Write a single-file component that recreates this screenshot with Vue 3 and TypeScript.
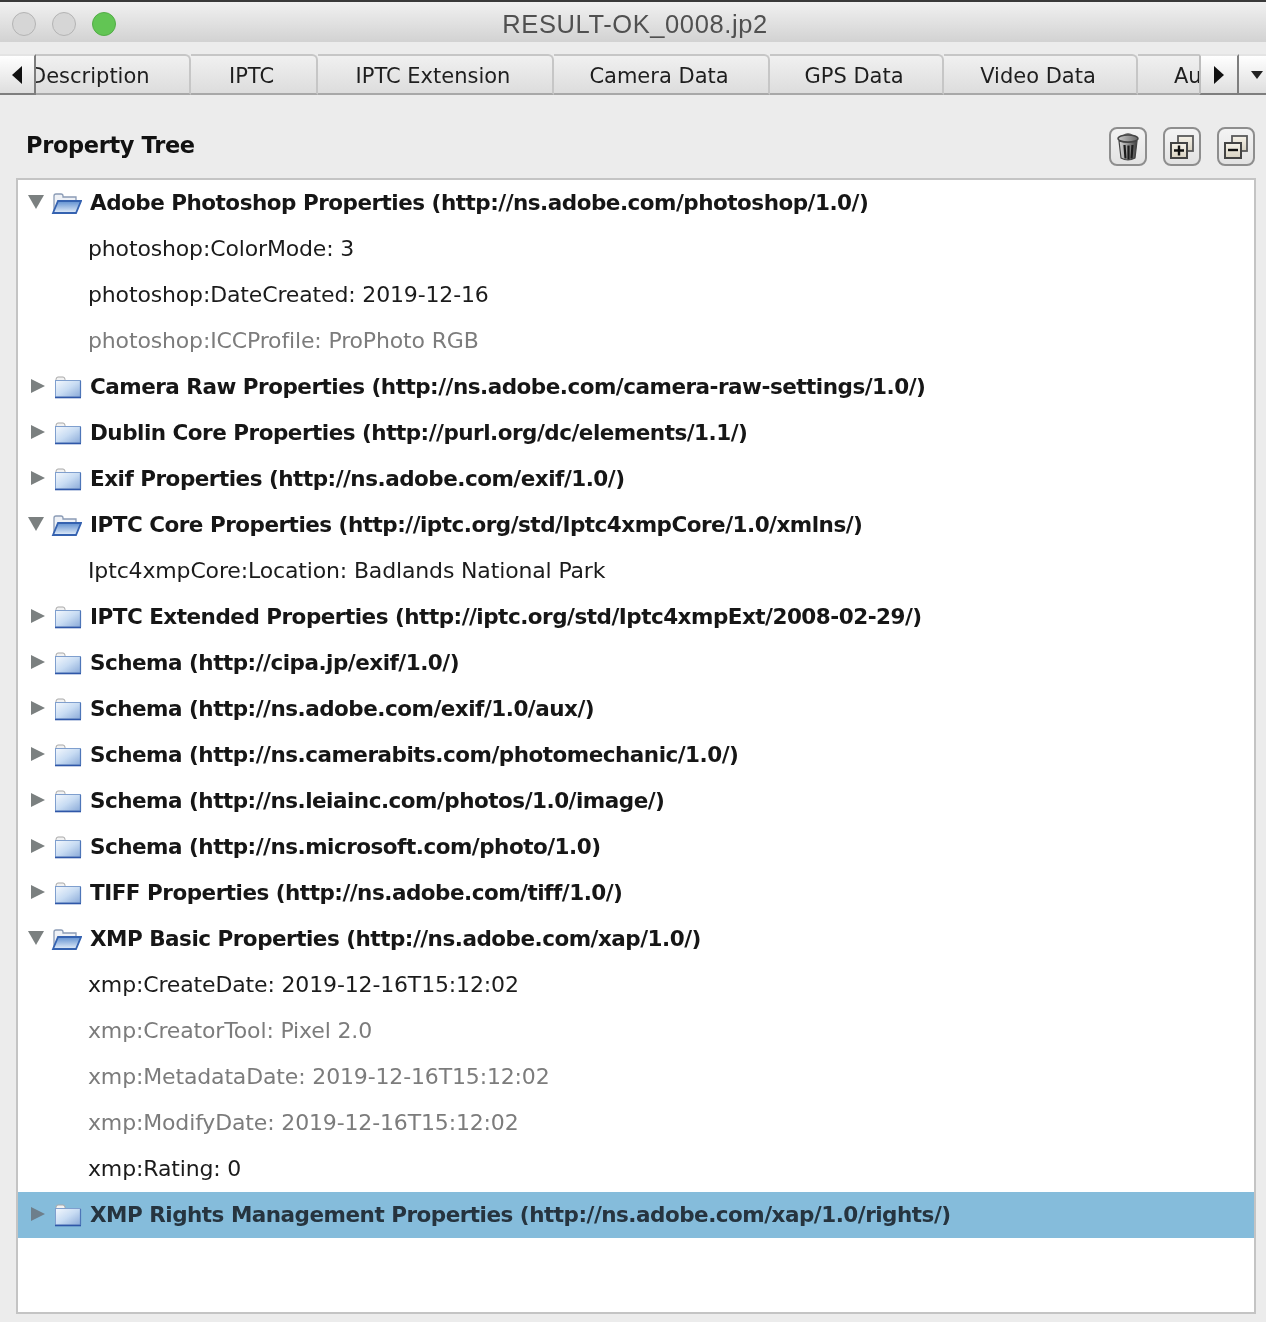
<script setup lang="ts">
interface Row { text: string; kind: 'open' | 'closed' | 'leaf' | 'muted'; selected?: boolean }
const tabs = ['Description', 'IPTC', 'IPTC Extension', 'Camera Data', 'GPS Data', 'Video Data', 'Audio Data']
const rows: Row[] = [
  { text: 'Adobe Photoshop Properties (http://ns.adobe.com/photoshop/1.0/)', kind: 'open' },
  { text: 'photoshop:ColorMode: 3', kind: 'leaf' },
  { text: 'photoshop:DateCreated: 2019-12-16', kind: 'leaf' },
  { text: 'photoshop:ICCProfile: ProPhoto RGB', kind: 'muted' },
  { text: 'Camera Raw Properties (http://ns.adobe.com/camera-raw-settings/1.0/)', kind: 'closed' },
  { text: 'Dublin Core Properties (http://purl.org/dc/elements/1.1/)', kind: 'closed' },
  { text: 'Exif Properties (http://ns.adobe.com/exif/1.0/)', kind: 'closed' },
  { text: 'IPTC Core Properties (http://iptc.org/std/Iptc4xmpCore/1.0/xmlns/)', kind: 'open' },
  { text: 'Iptc4xmpCore:Location: Badlands National Park', kind: 'leaf' },
  { text: 'IPTC Extended Properties (http://iptc.org/std/Iptc4xmpExt/2008-02-29/)', kind: 'closed' },
  { text: 'Schema (http://cipa.jp/exif/1.0/)', kind: 'closed' },
  { text: 'Schema (http://ns.adobe.com/exif/1.0/aux/)', kind: 'closed' },
  { text: 'Schema (http://ns.camerabits.com/photomechanic/1.0/)', kind: 'closed' },
  { text: 'Schema (http://ns.leiainc.com/photos/1.0/image/)', kind: 'closed' },
  { text: 'Schema (http://ns.microsoft.com/photo/1.0)', kind: 'closed' },
  { text: 'TIFF Properties (http://ns.adobe.com/tiff/1.0/)', kind: 'closed' },
  { text: 'XMP Basic Properties (http://ns.adobe.com/xap/1.0/)', kind: 'open' },
  { text: 'xmp:CreateDate: 2019-12-16T15:12:02', kind: 'leaf' },
  { text: 'xmp:CreatorTool: Pixel 2.0', kind: 'muted' },
  { text: 'xmp:MetadataDate: 2019-12-16T15:12:02', kind: 'muted' },
  { text: 'xmp:ModifyDate: 2019-12-16T15:12:02', kind: 'muted' },
  { text: 'xmp:Rating: 0', kind: 'leaf' },
  { text: 'XMP Rights Management Properties (http://ns.adobe.com/xap/1.0/rights/)', kind: 'closed', selected: true },
]
</script>

<template>
  <div class="window">
    <header class="titlebar">
      <div class="lights">
        <span class="light"></span>
        <span class="light"></span>
        <span class="light green"></span>
      </div>
      <span class="title">RESULT-OK_0008.jp2</span>
    </header>

    <nav class="tabstrip">
      <div class="tabs">
        <div v-for="t in tabs" :key="t" class="tab">{{ t }}</div>
      </div>
      <div class="scroll left">
        <svg width="12" height="18" viewBox="0 0 12 18"><path d="M11 0V18L1 9Z" fill="#111" /></svg>
      </div>
      <div class="scroll right">
        <svg width="12" height="18" viewBox="0 0 12 18"><path d="M1 0V18L11 9Z" fill="#111" /></svg>
      </div>
      <div class="scroll menu">
        <svg width="12" height="8" viewBox="0 0 12 8"><path d="M0 0H12L6 8Z" fill="#222" /></svg>
      </div>
    </nav>

    <section class="panel">
      <div class="panel-head">
        <h2 class="panel-title">Property Tree</h2>
        <div class="tools">
          <button class="tool" aria-label="Delete">
            <svg width="24" height="30" viewBox="0 0 24 30">
              <defs>
                <linearGradient id="can" x1="0" x2="1" y1="0" y2="0">
                  <stop offset="0" stop-color="#d8d8d8" />
                  <stop offset=".45" stop-color="#9a9a9a" />
                  <stop offset="1" stop-color="#3e3e3e" />
                </linearGradient>
                <linearGradient id="lid" x1="0" x2="1" y1="0" y2="0">
                  <stop offset="0" stop-color="#c8c8c8" />
                  <stop offset="1" stop-color="#6a6a6a" />
                </linearGradient>
              </defs>
              <path d="M8 3.5Q12 0.5 16 3.5" fill="none" stroke="#777" stroke-width="2" />
              <ellipse cx="12" cy="6.5" rx="10" ry="3.5" fill="url(#lid)" stroke="#444" stroke-width="1.4" />
              <path d="M3 9L5 26Q12 30 19 26L21 9Q12 12 3 9Z" fill="url(#can)" stroke="#444" stroke-width="1.2" />
              <path d="M8.5 13L9.5 26.5M12.5 13.5V27.5M16.5 13L15.5 26.5" stroke="#1c1c1c" stroke-width="2.2" fill="none" />
            </svg>
          </button>
          <button class="tool" aria-label="Expand all">
            <svg width="26" height="26" viewBox="0 0 26 26">
              <defs>
                <linearGradient id="page" x1="0" x2="0" y1="0" y2="1">
                  <stop offset="0" stop-color="#f6f2e8" />
                  <stop offset="1" stop-color="#d8d2c2" />
                </linearGradient>
              </defs>
              <rect x="9" y="2" width="15" height="15" fill="url(#page)" stroke="#5a5a5a" stroke-width="1.8" />
              <rect x="2" y="9" width="16" height="15" fill="url(#page)" stroke="#444" stroke-width="2" />
              <path d="M10 11.5V21.5M5 16.5H15" stroke="#111" stroke-width="2.4" />
            </svg>
          </button>
          <button class="tool" aria-label="Collapse all">
            <svg width="26" height="26" viewBox="0 0 26 26">
              <rect x="9" y="2" width="15" height="15" fill="url(#page)" stroke="#5a5a5a" stroke-width="1.8" />
              <rect x="2" y="9" width="16" height="15" fill="url(#page)" stroke="#444" stroke-width="2" />
              <path d="M5 16H15" stroke="#111" stroke-width="2.4" />
            </svg>
          </button>
        </div>
      </div>

      <div class="tree">
        <svg class="defs" width="0" height="0">
          <defs>
            <linearGradient id="fold" x1="0" y1="0" x2="1" y2="1">
              <stop offset="0" stop-color="#f4f8fd" />
              <stop offset=".5" stop-color="#c8dcf3" />
              <stop offset="1" stop-color="#8aaad8" />
            </linearGradient>
            <linearGradient id="foldopen" x1="0" y1="0" x2="0" y2="1">
              <stop offset="0" stop-color="#5f8fd0" />
              <stop offset="1" stop-color="#e4eefa" />
            </linearGradient>
          </defs>
        </svg>
        <div
          v-for="r in rows"
          :key="r.text"
          class="row"
          :class="[r.kind, { selected: r.selected }]"
        >
          <template v-if="r.kind === 'closed'">
            <svg class="arrow" width="16" height="16" viewBox="0 0 16 16"><path d="M1 1V15L15 8Z" /></svg>
            <svg class="folder" width="28" height="24" viewBox="0 0 28 24">
              <path d="M2 4.5Q2 2 4 2H9Q11 2 11 4.5V6H2Z" fill="#f2f2f2" stroke="#a8a8a8" />
              <rect x="1.5" y="5.5" width="25" height="16.5" fill="url(#fold)" stroke="#7f9fce" />
              <path d="M1 22.5H27" stroke="#2f57a8" stroke-width="1.6" />
              <path d="M26.5 6V22" stroke="#4e76b8" stroke-width="1.2" />
            </svg>
          </template>
          <template v-else-if="r.kind === 'open'">
            <svg class="arrow down" width="16" height="16" viewBox="0 0 16 16"><path d="M0 1H16L8 15Z" /></svg>
            <svg class="folder wide" width="31" height="24" viewBox="0 0 31 24">
              <path d="M3 21V5Q3 3 5 3H10Q12 3 12 5V6H25V10H8L3 21Z" fill="#eef1f6" stroke="#8a9bb5" stroke-width="1.3" />
              <path d="M7 10H30L25 22H2Z" fill="url(#foldopen)" stroke="#3562b0" stroke-width="1.8" />
            </svg>
          </template>
          <span class="label">{{ r.text }}</span>
        </div>
      </div>
    </section>
  </div>
</template>

<style scoped>
.window {
  width: 1266px;
  height: 1322px;
  display: flex;
  flex-direction: column;
  background: #ececec;
  font-family: "DejaVu Sans", sans-serif;
  color: #1b1b1b;
  overflow: hidden;
  filter: blur(0.5px);
}
.titlebar {
  height: 42px;
  flex: none;
  position: relative;
  display: flex;
  align-items: center;
  justify-content: center;
  background: linear-gradient(#f1f1f1, #d2d2d2);
  border-top: 2px solid #3a3a3a;
  box-sizing: border-box;
  padding: 4px 0 0 4px;
}
.lights {
  position: absolute;
  left: 12px;
  top: 10px;
  display: flex;
  gap: 16px;
}
.light {
  width: 24px;
  height: 24px;
  box-sizing: border-box;
  border-radius: 50%;
  background: #d6d6d6;
  border: 1px solid #b4b4b4;
}
.light.green {
  background: #62c554;
  border-color: #53ad47;
}
.title {
  font-family: "Liberation Sans", Arial, sans-serif;
  font-size: 25.5px;
  letter-spacing: 0.6px;
  color: #505050;
}
.tabstrip {
  margin-top: 12px;
  height: 41px;
  flex: none;
  position: relative;
}
.tabs {
  height: 100%;
  display: grid;
  grid-template-columns: 191px 127px 236px 216px 174px 194px 128px;
  overflow: hidden;
}
.tab {
  display: flex;
  align-items: center;
  justify-content: center;
  box-sizing: border-box;
  padding: 3px 4px 0 0;
  font-size: 21px;
  color: #1e1e1e;
  background: linear-gradient(#f0f0f0, #dddddd);
  border-top: 2px solid #c6c6c6;
  border-bottom: 2px solid #a8a8a8;
  border-right: 2px solid #c6c6c6;
  border-top-right-radius: 6px;
  overflow: hidden;
  white-space: nowrap;
}
.tab:first-child {
  justify-content: flex-start;
  padding-left: 30px;
}
.tab:last-child {
  justify-content: flex-start;
  padding-left: 36px;
  border-right: 0;
}
.scroll {
  position: absolute;
  top: 0;
  bottom: 0;
  box-sizing: border-box;
  display: flex;
  align-items: center;
  justify-content: center;
  background: linear-gradient(#ffffff, #dedede);
  border-top: 2px solid #e4e4e4;
  border-bottom: 2px solid #7e7e7e;
}
.scroll.left {
  left: 0;
  width: 36px;
  border-right: 2px solid #7e7e7e;
}
.scroll.right {
  left: 1199px;
  width: 40px;
  border-left: 2px solid #bdbdbd;
  border-right: 2px solid #7e7e7e;
}
.scroll.menu {
  left: 1239px;
  width: 27px;
  padding-left: 8px;
}
.panel {
  flex: 1;
  display: flex;
  flex-direction: column;
  padding: 32px 10px 8px 16px;
  min-height: 0;
}
.panel-head {
  height: 51px;
  flex: none;
  display: flex;
  align-items: flex-start;
  justify-content: space-between;
  padding-left: 10px;
}
.panel-title {
  margin: 0;
  font-size: 22.5px;
  line-height: 36px;
  font-weight: 700;
  letter-spacing: -0.35px;
  color: #111;
}
.tools {
  display: flex;
  gap: 16px;
  margin-right: 1px;
}
.tool {
  width: 38px;
  height: 39px;
  padding: 0;
  display: flex;
  align-items: center;
  justify-content: center;
  box-sizing: border-box;
  border: 2px solid #8e8e8e;
  border-radius: 8px;
  background: linear-gradient(#f4f4f4, #e2e2e2);
}
.tree {
  flex: 1;
  min-height: 0;
  background: #fff;
  border: 2px solid #c4c4c4;
}
.defs {
  position: absolute;
}
.row {
  height: 46px;
  display: flex;
  align-items: center;
  white-space: nowrap;
  padding-left: 12px;
  font-size: 22px;
}
.label {
  margin-top: -2px;
}
.row.leaf,
.row.muted {
  padding-left: 70px;
  letter-spacing: -0.15px;
}
.row.muted {
  color: #7c7c7c;
}
.row.closed,
.row.open {
  font-weight: 700;
  font-size: 21.5px;
  letter-spacing: -0.5px;
  color: #161616;
}
.arrow {
  flex: none;
  fill: #7b8080;
  margin: -2px 8px 0 0;
}
.arrow.down {
  margin-right: 7px;
  margin-left: -2px;
}
.folder {
  flex: none;
  margin-right: 8px;
}
.folder.wide {
  margin-right: 8px;
}
.row.selected {
  background: #85bcdb;
  color: #26343f;
}
.row.selected .arrow {
  fill: #6e7f8b;
}
</style>
